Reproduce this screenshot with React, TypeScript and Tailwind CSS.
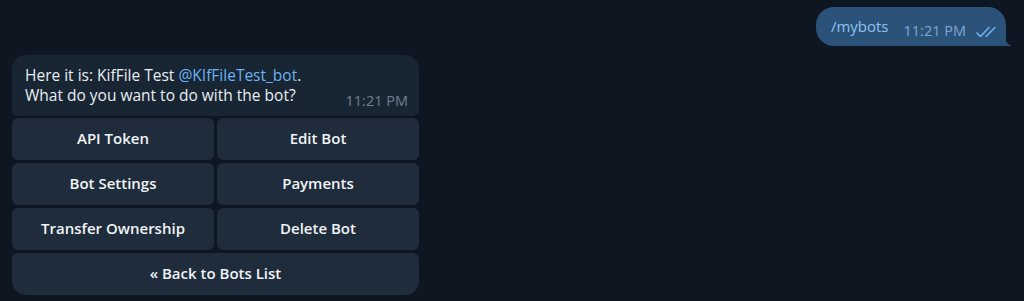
export default function App() {
  const buttons = [
    "API Token",
    "Edit Bot",
    "Bot Settings",
    "Payments",
    "Transfer Ownership",
    "Delete Bot",
  ]
  return (
    <div
      className="w-[1024px] h-[301px] bg-[#0e1621] overflow-hidden text-white"
      style={{ fontFamily: '"Open Sans", "Noto Sans", sans-serif' }}
    >
      {/* outgoing */}
      <div className="flex justify-end pt-[7px] pr-[18px]">
        <div className="relative flex items-start h-[39px] bg-[#2b5278] rounded-[18px] rounded-br-none pl-[15px] pr-[8px]">
          <span className="text-[15px] leading-[20px] mt-[9px] text-[#8cc3f2]">/mybots</span>
          <span className="text-[14.5px] leading-[18px] mt-[15px] ml-[15px] text-[#7da8d3]">11:21 PM</span>
          <svg className="ml-[10px] mt-[18px]" width="22" height="13" viewBox="0 0 22 13" fill="none">
            <path d="M1 8 L4.5 11.5 L13 2.5" stroke="#6ab2f2" strokeWidth="1.6" strokeLinecap="round" strokeLinejoin="round" />
            <path d="M10 11.5 L19 2.5" stroke="#6ab2f2" strokeWidth="1.6" strokeLinecap="round" strokeLinejoin="round" />
          </svg>
          <svg className="absolute -right-[6px] bottom-0" width="8" height="12" viewBox="0 0 8 12">
            <path d="M0 0 C0 6 3 10 8 12 L0 12 Z" fill="#2b5278" />
          </svg>
        </div>
      </div>

      {/* incoming with keyboard */}
      <div className="w-[407px] ml-[12px] mt-[9px]">
        <div className="flex items-end justify-between bg-[#182533] rounded-[14px] rounded-b-[6px] pt-[10px] pb-[6px] pl-[13px] pr-[11px]">
          <div className="text-[15.5px] leading-[20px] pb-[5px] text-[#e9eef3]">
            <div>
              Here it is: KifFile Test <span className="text-[#6ab3f3]">@KIfFileTest_bot</span>.
            </div>
            <div>What do you want to do with the bot?</div>
          </div>
          <span className="text-[14.5px] leading-[18px] text-[#6d7f8f]">11:21 PM</span>
        </div>
        <div className="grid grid-cols-2 gap-[3px] mt-[2px]">
          {buttons.map((b) => (
            <div
              key={b}
              className="h-[42px] flex items-center justify-center pb-[1px] bg-[#1f2c3b] rounded-[6px] text-[15px] font-semibold text-[#f1f4f7]"
            >
              {b}
            </div>
          ))}
          <div className="col-span-2 h-[42px] flex items-center justify-center pb-[1px] bg-[#1f2c3b] rounded-[6px] rounded-b-[14px] text-[15px] font-semibold text-[#f1f4f7]">
            « Back to Bots List
          </div>
        </div>
      </div>
    </div>
  )
}
